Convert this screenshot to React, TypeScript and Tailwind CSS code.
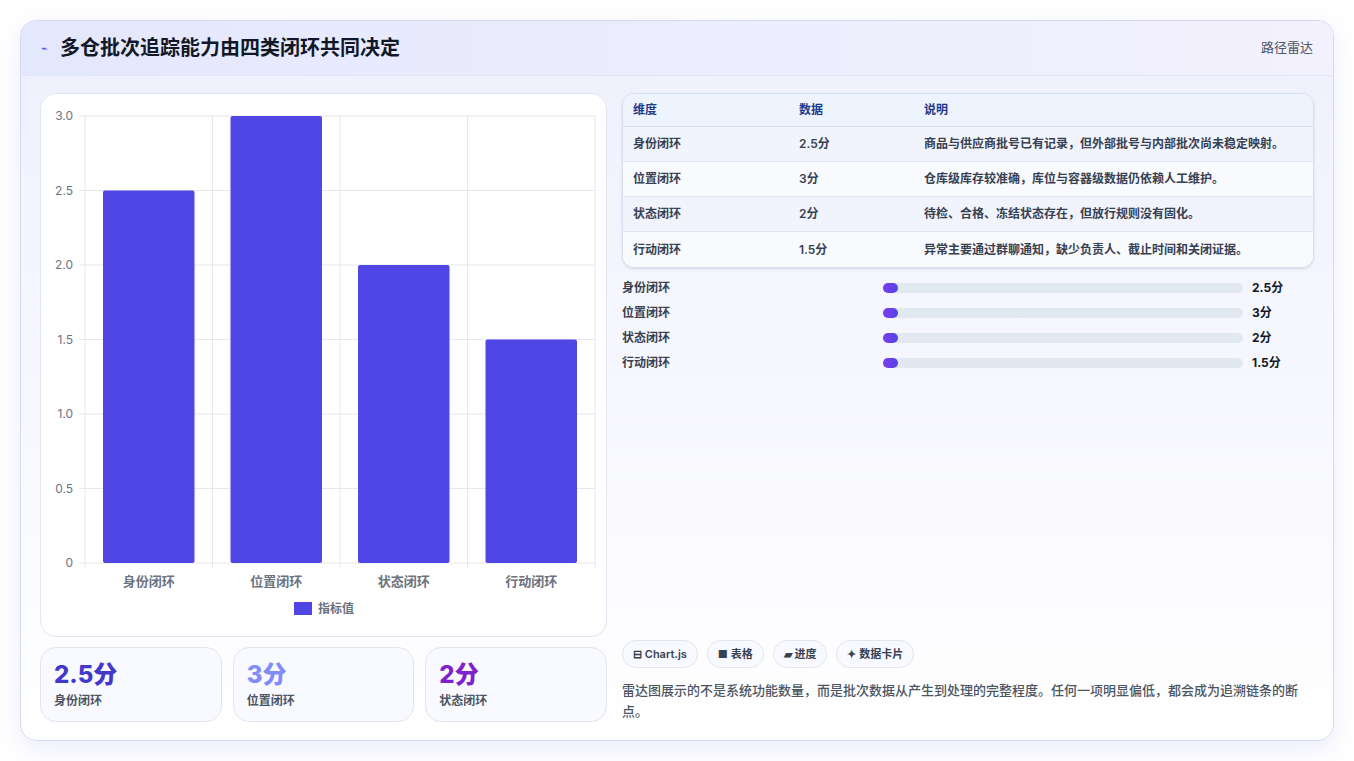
import React from "react";

const rows = [
  ["身份闭环", "2.5分", "商品与供应商批号已有记录，但外部批号与内部批次尚未稳定映射。"],
  ["位置闭环", "3分", "仓库级库存较准确，库位与容器级数据仍依赖人工维护。"],
  ["状态闭环", "2分", "待检、合格、冻结状态存在，但放行规则没有固化。"],
  ["行动闭环", "1.5分", "异常主要通过群聊通知，缺少负责人、截止时间和关闭证据。"],
];

function Chart() {
  const x0 = 44, x1 = 554, y0 = 22, y1 = 469;
  const vals = [2.5, 3, 2, 1.5];
  const labels = ["身份闭环", "位置闭环", "状态闭环", "行动闭环"];
  const ticks = [0, 0.5, 1, 1.5, 2, 2.5, 3];
  const yOf = (v: number) => y1 - (v / 3) * (y1 - y0);
  const step = (x1 - x0) / 4;
  return (
    <svg width="566" height="541" className="block" style={{ fontFamily: "Inter, 'Noto Sans CJK SC', sans-serif" }}>
      {ticks.map((t) => (
        <g key={t}>
          <line x1={x0 - 6} x2={x1} y1={yOf(t)} y2={yOf(t)} stroke="#e5e7eb" />
          <text x={x0 - 12} y={yOf(t) + 4} textAnchor="end" fontSize="12" fill="#6b7280">{t === 0 ? "0" : t.toFixed(1)}</text>
        </g>
      ))}
      {[0, 1, 2, 3, 4].map((i) => (
        <line key={i} x1={x0 + i * step} x2={x0 + i * step} y1={y0} y2={y1 + 6} stroke="#e5e7eb" />
      ))}
      {vals.map((v, i) => (
        <rect key={i} x={x0 + i * step + 18} y={yOf(v)} width={step - 36} height={y1 - yOf(v)} rx="2" fill="#4f46e5" />
      ))}
      {labels.map((l, i) => (
        <text key={l} x={x0 + i * step + step / 2} y={y1 + 23} textAnchor="middle" fontSize="13" fontWeight="600" fill="#6b7280">{l}</text>
      ))}
      <rect x="253" y="508" width="18" height="13" fill="#4f46e5" />
      <text x="277" y="519" fontSize="12" fontWeight="600" fill="#6b7280">指标值</text>
    </svg>
  );
}

export default function App() {
  return (
    <div className="min-h-screen w-full bg-white p-5" style={{ fontFamily: "Inter, 'Noto Sans CJK SC', sans-serif" }}>
      <div className="h-[721px] rounded-2xl border border-[#d6d9f5] bg-gradient-to-b from-[#eef0fd] to-white shadow-[0_8px_24px_rgba(99,102,241,0.12)] overflow-hidden flex flex-col">
        <div className="h-[55px] flex items-center justify-between px-5 bg-gradient-to-r from-[#e4e8fd] to-[#f3f1fd] border-b border-[#e3e6f7]">
          <div className="flex items-center gap-3">
            <span className="text-[#4f46e5] text-[11px]">⌁</span>
            <span className="text-[20px] font-bold text-[#111827]">多仓批次追踪能力由四类闭环共同决定</span>
          </div>
          <span className="text-[13px] text-[#4b5563]">路径雷达</span>
        </div>
        <div className="flex gap-[15px] px-[19px] pt-[17px]">
          <div className="w-[567px] flex flex-col gap-[10px]">
            <div className="h-[544px] rounded-2xl border border-[#e2e5f0] bg-white">
              <Chart />
            </div>
            <div className="grid grid-cols-3 gap-[11px]">
              {[
                ["2.5分", "text-[#4338ca]"],
                ["3分", "text-[#818cf8]"],
                ["2分", "text-[#7e22ce]"],
              ].map(([v, c], i) => (
                <div key={i} className="h-[75px] rounded-2xl border border-[#e2e5f0] bg-[#f9faff] px-[13px] pt-[12px]">
                  <div className={`text-[24px] font-extrabold leading-[30px] ${c}`}>{v}</div>
                  <div className="text-[12px] text-[#4b5563] font-semibold mt-[2px]">{rows[i][0]}</div>
                </div>
              ))}
            </div>
          </div>
          <div className="flex-1 flex flex-col">
            <div className="rounded-xl border border-[#d8def0] overflow-hidden shadow-sm">
              <div className="grid grid-cols-[166px_125px_1fr] h-[33px] items-center px-[10px] bg-[#eef4fe] border-b border-[#d8def0] text-[12px] font-semibold text-[#1e3a8a]">
                <span>维度</span><span>数据</span><span>说明</span>
              </div>
              {rows.map((r, i) => (
                <div key={i} className={`grid grid-cols-[166px_125px_1fr] h-[35px] items-center px-[10px] text-[12px] font-semibold text-[#374151] ${i % 2 === 0 ? "bg-[#f1f4fd]" : "bg-[#f8fafd]"} ${i < 3 ? "border-b border-[#e2e6f0]" : ""}`}>
                  <span>{r[0]}</span><span>{r[1]}</span><span>{r[2]}</span>
                </div>
              ))}
            </div>
            <div className="flex flex-col gap-[9px] mt-[12px]">
              {rows.map((r, i) => (
                <div key={i} className="flex items-center h-[16px] text-[12px] font-semibold text-[#374151]">
                  <span className="w-[261px]">{r[0]}</span>
                  <div className="w-[360px] h-[10px] rounded-full bg-[#e2e8f0]">
                    <div className="h-full w-[15px] rounded-full bg-gradient-to-r from-[#7c3aed] to-[#4f46e5]" />
                  </div>
                  <span className="ml-[9px] font-bold text-[#111827]">{r[1]}</span>
                </div>
              ))}
            </div>
            <div className="mt-auto">
              <div className="flex gap-[9px]">
                {["⊟ Chart.js", "■ 表格", "▰ 进度", "✦ 数据卡片"].map((t) => (
                  <span key={t} className="h-[28px] px-[10px] flex items-center rounded-full border border-[#e2e5f0] bg-[#f9faff] text-[11px] font-semibold text-[#374151]">{t}</span>
                ))}
              </div>
              <p className="mt-[12px] text-[13px] leading-[21px] text-[#4b5563] font-medium">雷达图展示的不是系统功能数量，而是批次数据从产生到处理的完整程度。任何一项明显偏低，都会成为追溯链条的断点。</p>
            </div>
          </div>
        </div>
      </div>
    </div>
  );
}
